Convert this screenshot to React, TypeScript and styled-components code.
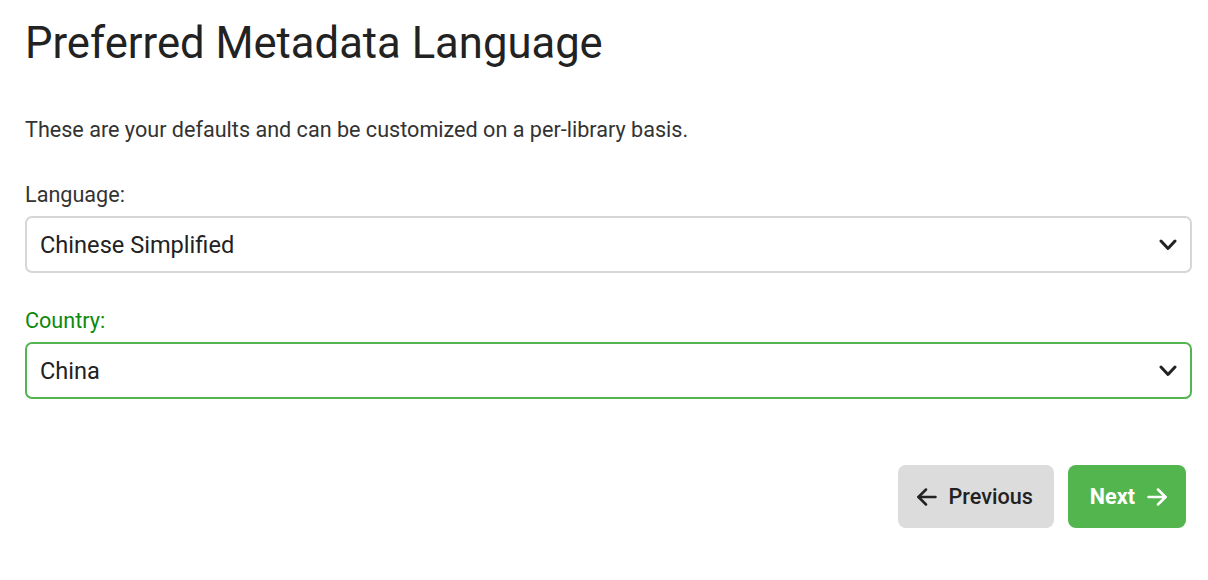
import React, { useState } from 'react'
import styled, { createGlobalStyle } from 'styled-components'

const Global = createGlobalStyle`
    body {
        margin: 0;
        background: #fff;
        font-family: Roboto, "Liberation Sans", sans-serif;
        color: #202020;
    }
`

const Page = styled.div`
    padding: 14px 16px 0 25px;
`
const Title = styled.h1`
    margin: 0;
    font-size: 43.6px;
    font-weight: 400;
    line-height: 60px;
    color: #222;
`
const Intro = styled.p`
    margin: 40px 0 0;
    font-size: 21.6px;
    line-height: 32px;
    color: #333;
`
const Field = styled.div`
    margin-top: 35px;
    & + & {
        margin-top: 34px;
    }
`
const Label = styled.label<{ $active?: boolean }>`
    display: block;
    font-size: 21.6px;
    line-height: 28px;
    margin-bottom: 7px;
    color: ${p => (p.$active ? '#0c890c' : '#333')};
`
const SelectBox = styled.div<{ $active?: boolean }>`
    display: flex;
    align-items: center;
    justify-content: space-between;
    height: 57px;
    box-sizing: border-box;
    padding: 0 13px;
    border: 2px solid ${p => (p.$active ? '#54b450' : '#d6d6d6')};
    border-radius: 7px;
    font-size: 23.6px;
    color: #222;
    cursor: pointer;
`
const Footer = styled.div`
    display: flex;
    justify-content: flex-end;
    gap: 14px;
    margin-top: 66px;
    padding-right: 6px;
`
const Button = styled.button<{ $primary?: boolean }>`
    display: flex;
    align-items: center;
    gap: 12px;
    height: 63px;
    padding: ${p => (p.$primary ? '0 19px 0 22px' : '0 21px 0 19px')};
    border: none;
    border-radius: 8px;
    font-family: inherit;
    font-size: 21.6px;
    font-weight: ${p => (p.$primary ? 700 : 500)};
    background: ${p => (p.$primary ? '#53b54d' : '#dcdcdc')};
    color: ${p => (p.$primary ? '#fff' : '#222')};
    cursor: pointer;
`

const Chevron = () => (
    <svg width="18" height="12" viewBox="0 0 18 12" fill="none" stroke="#222" strokeWidth="3" strokeLinecap="round" strokeLinejoin="round">
        <polyline points="2,2 9,9.5 16,2" />
    </svg>
)

const Arrow = ({ dir }: { dir: 'left' | 'right' }) => (
    <svg width="20" height="20" viewBox="0 0 20 20" fill="none" stroke="currentColor" strokeWidth="2.5" strokeLinecap="round" strokeLinejoin="round"
        style={{ transform: dir === 'left' ? 'scaleX(-1)' : undefined }}>
        <line x1="1.5" y1="10" x2="18.5" y2="10" />
        <polyline points="11,2.5 18.5,10 11,17.5" />
    </svg>
)

const App = () => {
    const [language] = useState('Chinese Simplified')
    const [country] = useState('China')
    return (
        <>
            <Global />
            <Page>
                <Title>Preferred Metadata Language</Title>
                <Intro>These are your defaults and can be customized on a per-library basis.</Intro>
                <Field>
                    <Label>Language:</Label>
                    <SelectBox>
                        <span>{language}</span>
                        <Chevron />
                    </SelectBox>
                </Field>
                <Field>
                    <Label $active>Country:</Label>
                    <SelectBox $active>
                        <span>{country}</span>
                        <Chevron />
                    </SelectBox>
                </Field>
                <Footer>
                    <Button>
                        <Arrow dir="left" />
                        Previous
                    </Button>
                    <Button $primary>
                        Next
                        <Arrow dir="right" />
                    </Button>
                </Footer>
            </Page>
        </>
    )
}

export default App
